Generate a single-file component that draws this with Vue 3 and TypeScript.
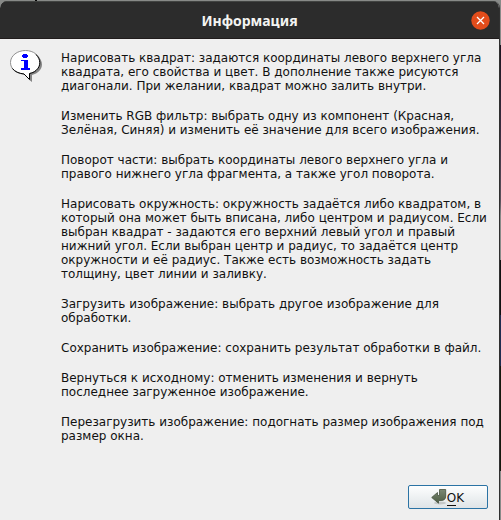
<script setup lang="ts">
const paragraphs: string[][] = [
  [
    'Нарисовать квадрат: задаются координаты левого верхнего угла',
    'квадрата, его свойства и цвет. В дополнение также рисуются',
    'диагонали. При желании, квадрат можно залить внутри.',
  ],
  [
    'Изменить RGB фильтр: выбрать одну из компонент (Красная,',
    'Зелёная, Синяя) и изменить её значение для всего изображения.',
  ],
  [
    'Поворот части: выбрать координаты левого верхнего угла и',
    'правого нижнего угла фрагмента, а также угол поворота.',
  ],
  [
    'Нарисовать окружность: окружность задаётся либо квадратом, в',
    'который она может быть вписана, либо центром и радиусом. Если',
    'выбран квадрат - задаются его верхний левый угол и правый',
    'нижний угол. Если выбран центр и радиус, то задаётся центр',
    'окружности и её радиус. Также есть возможность задать',
    'толщину, цвет линии и заливку.',
  ],
  ['Загрузить изображение: выбрать другое изображение для', 'обработки.'],
  ['Сохранить изображение: сохранить результат обработки в файл.'],
  ['Вернуться к исходному: отменить изменения и вернуть', 'последнее загруженное изображение.'],
  ['Перезагрузить изображение: подогнать размер изображения под', 'размер окна.'],
]
</script>

<template>
  <div class="desktop">
    <section class="dialog">
      <header class="titlebar">
        <h1>Информация</h1>
        <button class="close" aria-label="Закрыть">
          <svg width="19" height="19" viewBox="0 0 19 19">
            <circle cx="9.500" cy="9.500" r="9.200" fill="#e24c1b" />
            <path d="M6 6 13 13M13 6 6 13" stroke="#fff" stroke-width="1.3" />
          </svg>
        </button>
      </header>
      <div class="content">
        <svg class="info" width="32" height="32" viewBox="0 0 32 32">
          <path
            d="M17 3C26 3 32 8 32 14.500C32 19.500 28 23.500 22 25V32L20 30.500L15 25Z"
            fill="#858585"
          />
          <path
            d="M15.500 .5C23.500 .5 30 5.500 30 12.500C30 18 26 22 19.500 23.500V29.500L14 24C6 23.500 .500 19 .500 12.500C.500 5.500 7.500 .500 15.500 .500Z"
            fill="#fff"
            stroke="#909090"
          />
          <path
            d="M26 4.500C31 9.500 31.200 16 26 20.500C24 22.300 22 23 19.500 23.500V29.500L14 24C9 23.500 4.500 21.500 2.500 18.500"
            fill="none"
            stroke="#000"
          />
          <path
            d="M13 4h4v1h1v2h-1v1h-4v-1h-1v-2h1zM11 10h7v8h2v2h-9v-2h3v-7h-3z"
            fill="#0000ff"
            shape-rendering="crispEdges"
          />
        </svg>
        <div class="message">
          <p v-for="(lines, i) in paragraphs" :key="i">
            <span v-for="line in lines" :key="line">{{ line }}</span>
          </p>
        </div>
      </div>
      <footer>
        <button class="ok">
          <svg width="16" height="16" viewBox="0 0 16 16">
            <defs>
              <linearGradient id="arrow" x1="0" y1="0" x2="0" y2="1">
                <stop offset="0" stop-color="#7c8974" />
                <stop offset="1" stop-color="#4d5d44" />
              </linearGradient>
            </defs>
            <ellipse cx="9" cy="14" rx="6" ry="1.500" fill="#c4c8c8" />
            <path
              d="M8.500 .5H14.700V7Q14.700 11.500 10 11.500H7.500V14.200L.700 8.500L6.500 3.500V6.500H8.500Z"
              fill="url(#arrow)"
              stroke="#46533f"
              stroke-width=".8"
            />
          </svg>
          <span class="label"><span class="key">O</span>K</span>
        </button>
      </footer>
    </section>
    <aside class="backdrop"></aside>
  </div>
</template>

<style>
body {
  margin: 0;
  overflow: hidden;
}
</style>

<style scoped>
.desktop {
  display: flex;
  box-sizing: border-box;
  width: 501px;
  height: 520px;
  padding-top: 1px;
  background: linear-gradient(90deg, transparent 35px, #050505 35px 37px, transparent 37px) 0 0 / 100% 1px no-repeat, #888a88;
}
.dialog {
  box-sizing: border-box;
  display: flex;
  flex-direction: column;
  width: 500px;
  height: 519px;
  border-right: 1px solid #303030;
  border-radius: 7px 7px 0 0;
  background: #efefef;
  overflow: hidden;
  font-family: 'DejaVu Sans', sans-serif;
  font-size: 12px;
  color: #111;
}
.titlebar {
  box-sizing: border-box;
  display: grid;
  grid-template-columns: 28px 1fr 28px;
  align-items: center;
  height: 38px;
  flex: none;
  padding-top: 1px;
  border-top: 1px solid #424442;
  border-bottom: 1px solid #201c1c;
  background: #2c2c2c;
}
h1 {
  grid-column: 2;
  margin: 0;
  text-align: center;
  font: bold 14px/18px 'Noto Sans', sans-serif;
  color: #f4f4f2;
}
.close {
  display: flex;
  width: 19px;
  height: 19px;
  padding: 0;
  border: 0;
  background: none;
}
.content {
  display: flex;
  padding: 11px 0 0 10px;
}
.info {
  flex: none;
  margin-right: 19px;
}
.message {
  display: flex;
  flex-direction: column;
  gap: 16px;
  padding-top: 1px;
}
p {
  margin: 0;
  line-height: 14px;
}
p span {
  display: block;
  white-space: nowrap;
}
footer {
  display: flex;
  justify-content: flex-end;
  margin-top: auto;
  padding: 0 11px 11px 0;
}
.ok {
  box-sizing: border-box;
  display: flex;
  align-items: center;
  justify-content: center;
  width: 80px;
  height: 24px;
  padding: 0 1px 0 0;
  border: 1px solid #2b73a4;
  border-radius: 2px;
  background: linear-gradient(#fdfefe, #dfe4e7);
  font: inherit;
  color: #111;
}
.label {
  display: flex;
  line-height: 13px;
  padding-top: 3px;
}
.key {
  border-bottom: 1px solid #111;
}
.backdrop {
  width: 1px;
  background: linear-gradient(#888a88 44px, #1c1420 44px, #3a2c40 130px, #5c525c 200px, #888a88 215px 259px, #111 259px 314px, #202c50 314px 365px, #15180e 365px 470px, #888a88 470px);
}
</style>
